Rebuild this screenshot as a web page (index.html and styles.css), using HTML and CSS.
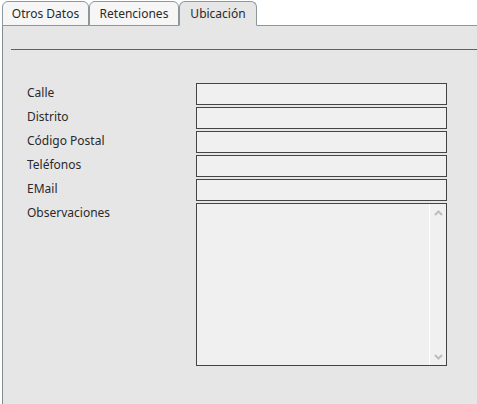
FILE: index.html
```html
<!DOCTYPE html>
<html lang="es">
<head>
<meta charset="utf-8">
<title>Ubicación</title>
<link rel="stylesheet" href="styles.css">
</head>
<body>
<div class="tabs">
  <div class="tab t1">Otros Datos</div>
  <div class="tab t2">Retenciones</div>
  <div class="tab t3 active">Ubicación</div>
  <div class="tab-fill"></div>
</div>
<div class="panel">
  <div class="rule"></div>
  <div class="form">
    <label class="lbl">Calle</label><div class="field"></div>
    <label class="lbl">Distrito</label><div class="field"></div>
    <label class="lbl">Código Postal</label><div class="field"></div>
    <label class="lbl">Teléfonos</label><div class="field"></div>
    <label class="lbl">EMail</label><div class="field"></div>
    <label class="lbl">Observaciones</label>
    <div class="area">
      <div class="area-text"></div>
      <div class="scroll">
        <svg width="9" height="6" viewBox="0 0 9 6"><path d="M1 5 L4.5 1.5 L8 5" fill="none" stroke="#bdbdbd" stroke-width="2"/></svg>
        <svg width="9" height="6" viewBox="0 0 9 6"><path d="M1 1 L4.5 4.5 L8 1" fill="none" stroke="#bdbdbd" stroke-width="2"/></svg>
      </div>
    </div>
  </div>
</div>
</body>
</html>
```
FILE: styles.css
```css
html, body {
  margin: 0;
  padding: 0;
  background: #ffffff;
  font-family: "Noto Sans", "DejaVu Sans", sans-serif;
  font-size: 12px;
  color: #2a2a2a;
}
body {
  width: 477px;
  height: 404px;
  overflow: hidden;
}
.tabs {
  display: flex;
  padding: 1px 0 0 2px;
  height: 24px;
}
.tab {
  box-sizing: border-box;
  height: 25px;
  border: 1px solid #8d979c;
  border-radius: 6px 6px 0 0;
  background: #f6f6f6;
  line-height: 23px;
  padding: 0 7px;
  text-align: center;
  color: #2a2a2a;
}
.t1 { width: 87px; }
.t2 { width: 90px; }
.t3 { width: 78px; }
.tab.active {
  background: #e6e6e6;
  border-bottom-color: #e6e6e6;
  position: relative;
  z-index: 1;
}
.tab-fill {
  flex: 1;
}
.panel {
  box-sizing: border-box;
  margin-left: 2px;
  border-left: 1px solid #7f8c92;
  border-top: 1px solid #8d979c;
  background: #e6e6e6;
  height: 379px;
  padding-top: 23px;
}
.rule {
  margin-left: 8px;
  height: 1px;
  background: #2f6ea3;
}
.form {
  display: grid;
  grid-template-columns: 169px 251px;
  row-gap: 2px;
  margin: 33px 0 0 24px;
}
.lbl {
  line-height: 18px;
  padding-top: 1px;
  color: #2a2a2a;
}
.field {
  box-sizing: border-box;
  height: 22px;
  border: 1px solid #444444;
  background: #f0f0f0;
}
.area {
  box-sizing: border-box;
  height: 163px;
  border: 1px solid #444444;
  background: #f0f0f0;
  display: flex;
}
.area-text {
  flex: 1;
}
.scroll {
  width: 16px;
  border-left: 1px solid #ffffff;
  display: flex;
  flex-direction: column;
  justify-content: space-between;
  align-items: center;
  padding: 6px 0 5px;
}
```
